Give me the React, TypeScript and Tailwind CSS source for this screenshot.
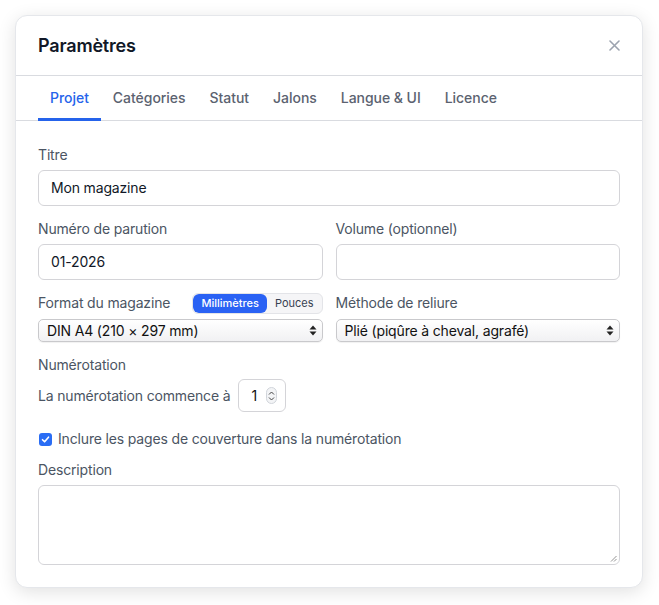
import { useState } from 'react';

const tabs = ['Projet', 'Catégories', 'Statut', 'Jalons', 'Langue & UI', 'Licence'];

function Label({ children }: { children: React.ReactNode }) {
  return <div className="text-sm leading-5 text-[#4b5563]">{children}</div>;
}

function TextInput({ value }: { value?: string }) {
  return (
    <div className="mt-[5px] flex h-[36px] items-center rounded-md border border-[#d4d4d8] bg-white px-3 text-sm text-[#111827]">
      {value}
    </div>
  );
}

// native-looking macOS select
function FakeSelect({ value }: { value: string }) {
  return (
    <div className="mt-[6px] flex h-[23px] items-center justify-between rounded-[5px] border border-[#c9c9cc] bg-gradient-to-b from-white to-[#f1f1f3] pl-2 pr-[5px] text-sm text-[#111] shadow-[0_1px_1px_rgba(0,0,0,0.06)]">
      <span>{value}</span>
      <svg width="8" height="13" viewBox="0 0 8 13" className="text-[#222]">
        <path d="M4 1.5 L7.5 5.5 L0.5 5.5 Z" fill="currentColor" />
        <path d="M4 11.5 L7.5 7.5 L0.5 7.5 Z" fill="currentColor" />
      </svg>
    </div>
  );
}

export default function App() {
  const [active, setActive] = useState(0);
  const [unit, setUnit] = useState<'mm' | 'in'>('mm');

  return (
    <div className="min-h-screen bg-white p-[15px] font-['Inter',sans-serif] tracking-[-0.01em] text-[#111827]">
      <div className="w-[628px] overflow-hidden rounded-xl border border-[#e5e7eb] bg-white shadow-[0_4px_18px_rgba(0,0,0,0.12)]">
        {/* Header */}
        <div className="flex h-[60px] items-center justify-between border-b border-[#d9dbe0] pl-[22px] pr-[22px]">
          <h2 className="text-lg font-semibold tracking-[-0.01em] text-[#111827]">Paramètres</h2>
          <button className="text-[#9ca3af]">
            <svg width="11" height="11" viewBox="0 0 11 11">
              <path d="M1 1 L10 10 M10 1 L1 10" stroke="currentColor" strokeWidth="1.6" strokeLinecap="round" />
            </svg>
          </button>
        </div>

        {/* Tabs */}
        <div className="flex h-[45px] border-b border-[#d9dbe0] px-[22px]">
          {tabs.map((t, i) => (
            <button
              key={t}
              onClick={() => setActive(i)}
              className={
                i === active
                  ? 'relative px-3 text-sm font-medium tracking-[-0.003em] text-[#2563eb]'
                  : 'relative px-3 text-sm font-medium tracking-[-0.003em] text-[#5b6270]'
              }
            >
              {t}
              {i === active && <span className="absolute inset-x-0 bottom-[-1px] h-[3px] bg-[#2563eb]" />}
            </button>
          ))}
        </div>

        {/* Body */}
        <div className="px-[22px] pb-[22px] pt-6">
          <Label>Titre</Label>
          <TextInput value="Mon magazine" />

          <div className="mt-[13px] grid grid-cols-2 gap-[13px]">
            <div>
              <Label>Numéro de parution</Label>
              <TextInput value="01-2026" />
            </div>
            <div>
              <Label>Volume (optionnel)</Label>
              <TextInput />
            </div>
          </div>

          <div className="mt-[13px] grid grid-cols-2 gap-[13px]">
            <div>
              <div className="flex h-5 items-center justify-between">
                <Label>Format du magazine</Label>
                <div className="flex h-[21px] overflow-hidden rounded-md border border-[#e3e4e8] bg-[#f5f5f7] text-[11px] tracking-normal">
                  <button
                    onClick={() => setUnit('mm')}
                    className={unit === 'mm' ? 'rounded-md bg-[#2a62f4] px-2 font-medium text-white' : 'px-2 text-[#374151]'}
                  >
                    Millimètres
                  </button>
                  <button
                    onClick={() => setUnit('in')}
                    className={unit === 'in' ? 'rounded-md bg-[#2a62f4] px-2 font-medium text-white' : 'px-2 text-[#374151]'}
                  >
                    Pouces
                  </button>
                </div>
              </div>
              <FakeSelect value="DIN A4 (210 × 297 mm)" />
            </div>
            <div>
              <div className="flex h-5 items-center">
                <Label>Méthode de reliure</Label>
              </div>
              <FakeSelect value="Plié (piqûre à cheval, agrafé)" />
            </div>
          </div>

          <div className="mt-[13px]">
            <Label>Numérotation</Label>
            <div className="mt-1 flex items-center gap-2">
              <span className="text-sm text-[#4b5563]">La numérotation commence à</span>
              <div className="flex h-[33px] w-[48px] items-center justify-between rounded-md border border-[#d4d4d8] bg-white pl-3 pr-2 text-sm text-[#111]">
                <span>1</span>
                <div className="flex h-[17px] w-[11px] flex-col items-center justify-center rounded-full border border-[#d1d5db] bg-[#f3f4f6]">
                  <svg width="7" height="12" viewBox="0 0 7 12" className="text-[#444]">
                    <path d="M1 4.5 L3.5 2 L6 4.5" fill="none" stroke="currentColor" strokeWidth="1" />
                    <path d="M1 7.5 L3.5 10 L6 7.5" fill="none" stroke="currentColor" strokeWidth="1" />
                  </svg>
                </div>
              </div>
            </div>
          </div>

          <label className="mt-[17px] flex items-center gap-[6px] pl-[1px] text-sm text-[#4b5563]">
            <span className="flex h-[13px] w-[13px] items-center justify-center rounded-[3px] bg-[#2a6df4]">
              <svg width="9" height="9" viewBox="0 0 9 9">
                <path d="M1.5 4.7 L3.6 6.8 L7.5 2.2" fill="none" stroke="white" strokeWidth="1.6" strokeLinecap="round" strokeLinejoin="round" />
              </svg>
            </span>
            Inclure les pages de couverture dans la numérotation
          </label>

          <div className="mt-[11px]">
            <Label>Description</Label>
            <div className="relative mt-[5px] h-[80px] rounded-md border border-[#d4d4d8] bg-white">
              <svg width="7" height="7" viewBox="0 0 7 7" className="absolute bottom-[2px] right-[2px] text-[#888]">
                <path d="M6.5 1 L1 6.5 M6.5 4 L4 6.5" stroke="currentColor" strokeWidth="0.9" />
              </svg>
            </div>
          </div>
        </div>
      </div>
    </div>
  );
}
